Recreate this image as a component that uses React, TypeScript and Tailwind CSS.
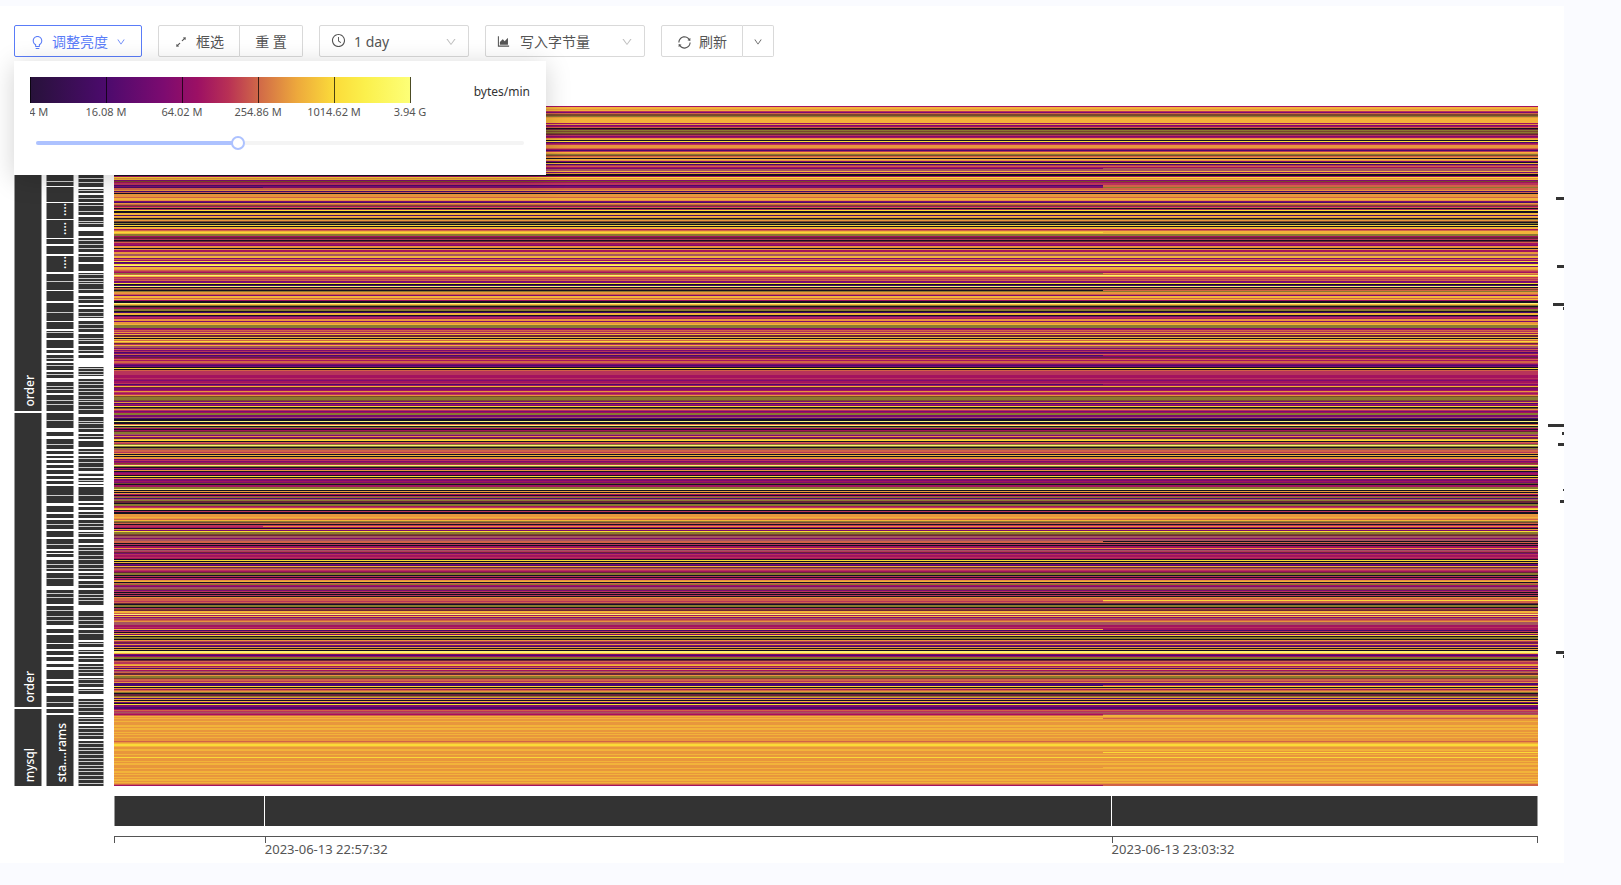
import { useState } from "react";
import {
  AiOutlineAreaChart,
  AiOutlineArrowsAlt,
  AiOutlineBulb,
  AiOutlineClockCircle,
  AiOutlineDown,
  AiOutlineSync,
} from "react-icons/ai";

const COLORS: Record<string, string> = {
  k: "#141021",
  p: "#4a0a6c",
  v: "#7c0b70",
  m: "#a3125f",
  r: "#b8345a",
  s: "#a5545f",
  c: "#d06247",
  o: "#e8963c",
  y: "#f2b33a",
  Y: "#fada38",
  L: "#fbf376",
  g: "#8a7a30",
  b: "#79492c",
  d: "#6a2438",
};

// one letter per heat map row, top to bottom, in groups of ten
const ROWS = `
  myyoyrvcbb goyyyyymov mckdgbgbdr vmoykYpmro oocmpryogb
  cokyovkypr cmsssyvokk mYoyvbmrrr pvccopckoo ocyyovpocb
  mckrYkkyyp yokgobkgkY kyymcyYygg mddrkdcmmv ookommooss
  yyvcmYpvYL vyyocrmocL yrcrcvvYkp Lkcbkgoocv yycymkkLyg
  kdmggkpyyk vrmoovooyg ggvmcromyd dykycYodry ssvcvrpvcm
  vdmcmccrvp vkYkcrrrrm mmrmvmmrvm ydvvmormro bgggbvopmv
  Ykborvmggv vspkkLkkcL kgmkmdggsv ovdyYkcrgL gkgsccroky
  koovrvmbrL gkmpokvmmk Ykovvmvbkm mggLkokomk rgpsgddkgg
  mryYkrkkoo oyocygbckr omkovYggbd ssvsscckrk mmovsrdvrm
  mrmkYkykvp ydscrmdggk rkrvoykcgm vssbvrkrkr koccrrcdkg
  gkrbdyycLm yvsrcosssm mrmyprkovY kggkordvov pokokLLyvp
  mggkdcrroy mcpomscddo ggbccroppr Ykomcogkdd gopokyvkYv
  vppmcrsrsm
  yoyooyoooy yoyyooyoyo oyooocoyYY yooyyoooyo oYoooyoyyo
  ooyooyyoyo oyoyyoyocm
`;

const CELLS = ROWS.replace(/\s/g, "").split("");

// rows whose value changes over time, as [row, colour]
const BEFORE: [number, string][] = [
  [62, "v"], [79, "p"], [80, "v"], [96, "p"], [126, "Y"], [167, "g"],
  [184, "k"], [249, "p"], [278, "p"], [435, "c"], [494, "c"], [523, "y"],
  [579, "p"], [608, "m"], [609, "c"],
];
const AFTER: [number, string][] = [
  [62, "s"], [63, "s"], [79, "c"], [80, "c"], [81, "g"], [126, "y"],
  [167, "o"], [184, "c"], [435, "k"], [494, "Y"], [495, "c"], [523, "m"],
  [609, "y"], [610, "y"], [612, "c"], [646, "Y"], [661, "y"], [678, "c"], [679, "c"],
];

// gaps between the blocks of a column, as [top, height]; the thin ones are grey
const POD_GAPS: number[][] = [
  [75], [80, 1], [96, 1], [113, 1], [132, 1], [138, 2], [148, 2], [166, 2], [175], [184, 1],
  [195, 2], [206], [215, 1], [223, 2], [226], [232, 2], [242, 2], [247, 2], [252], [255, 2],
  [259], [264, 2], [268], [272, 4], [280], [283], [287, 2], [294], [298], [305, 2], [314],
  [322, 4], [330, 3], [338], [343, 2], [348, 2], [352, 2], [357, 2], [362, 2], [368, 2],
  [373, 2], [378, 2], [389], [397, 3], [406, 2], [412, 2], [418], [423, 2], [431, 2],
  [438], [443, 2], [447, 1], [451, 3], [458], [462], [465, 2], [472], [480, 4], [487],
  [491], [498, 2], [504], [510], [514], [519, 4], [527, 2], [537, 1], [543, 2], [549, 2],
  [555, 3], [561, 3], [573, 2], [578, 2], [587, 3], [596], [601, 2], [607, 2],
];

const NODE_GAPS: number[][] = [
  [72], [76], [81, 2], [84], [87, 2], [92], [96, 1], [99], [105], [109, 2], [115], [117], [121, 4],
  [130, 2], [134], [138], [142], [146, 2], [150], [156, 2], [165, 2], [168], [172], [175],
  [177], [183], [187, 3], [193], [197, 2], [201, 2], [206], [210], [212, 3], [218], [222],
  [226, 2], [232], [234], [238, 2], [244], [247, 2], [252, 9], [262], [265], [268], [270, 3],
  [275], [278], [282], [285], [289], [293], [295], [299], [303], [308, 3], [315], [317],
  [322], [326, 2], [330], [333, 2], [341, 2], [345], [348, 2], [352], [356], [361],
  [365, 2], [367], [370, 2], [374], [376, 2], [379, 2], [389], [395, 2], [399, 2], [404, 2], [408], [412, 2],
  [417], [420], [424, 2], [427], [431, 2], [437, 2], [441], [444], [449], [453], [458],
  [462], [465, 2], [469], [473, 2], [478], [482, 2], [488], [491], [494], [499, 6],
  [510], [514], [518], [522, 2], [527], [534, 2], [537], [541, 3], [545], [548, 2],
  [552], [556, 2], [560], [563], [566], [570, 2], [573], [577], [581, 2], [584],
  [588, 5], [595], [598], [601], [605], [609, 2], [612], [615], [618, 2], [622], [626],
  [629], [633, 2], [637], [641], [644], [648], [652], [655], [659], [662], [665], [669], [673], [677],
];

const SCALE = ["4 M", "16.08 M", "64.02 M", "254.86 M", "1014.62 M", "3.94 G"];

const MARKS = [
  { y: 91, w: 8, h: 3 },
  { y: 159, w: 7, h: 3 },
  { y: 197, w: 11, h: 3 },
  { y: 201, w: 1, h: 3 },
  { y: 318, w: 16, h: 3 },
  { y: 326, w: 2, h: 3 },
  { y: 337, w: 6, h: 3 },
  { y: 383, w: 1, h: 2 },
  { y: 394, w: 4, h: 3 },
  { y: 545, w: 8, h: 3 },
  { y: 549, w: 1, h: 3 },
];

function Bars({ gaps, className }: { gaps: number[][]; className: string }) {
  return (
    <svg
      viewBox="0 0 28 680"
      preserveAspectRatio="none"
      shapeRendering="crispEdges"
      className={`block h-[680px] ${className}`}
      aria-hidden="true"
    >
      <rect width="28" height="680" fill="#333" />
      <path d="M0 0h1v680h-1zM27 0h1v680h-1z" fill="#999" />
      {gaps.map(([y, h]) => (
        <rect key={y} y={y} width="28" height={h ?? 1} fill={h ? "#fff" : "#ccc"} />
      ))}
    </svg>
  );
}

function VerticalText({ text }: { text: string }) {
  return (
    <span className="rotate-180 text-xs leading-4 font-medium whitespace-nowrap text-white [writing-mode:vertical-rl]">
      {text}
    </span>
  );
}

function Service({ name, className }: { name: string; className: string }) {
  return (
    <div className={`flex items-end border-x border-[#999] bg-[#333] pb-1 pl-[7px] ${className}`}>
      <VerticalText text={name} />
    </div>
  );
}

function Changes({ rows, x, width }: { rows: [number, string][]; x: number; width: number }) {
  return (
    <>
      {rows.map(([y, c]) => (
        <rect key={y} x={x} y={y} width={width} height="1" fill={COLORS[c]} />
      ))}
    </>
  );
}

function HeatMap() {
  return (
    <svg
      viewBox="0 0 1424 680"
      preserveAspectRatio="none"
      shapeRendering="crispEdges"
      className="block h-[680px] w-full"
      role="img"
      aria-label="写入字节量"
    >
      {CELLS.map((c, i) => (
        <rect key={i} y={i} width="1424" height="1" fill={COLORS[c]} />
      ))}
      <Changes rows={BEFORE} x={0} width={989} />
      <Changes rows={AFTER} x={989} width={435} />
      <rect y="81" x="0" width="149" height="1" fill={COLORS.p} />
      <rect y="420" x="0" width="149" height="1" fill={COLORS.r} />
    </svg>
  );
}

function Toolbar({ open, onToggle }: { open: boolean; onToggle: () => void }) {
  return (
    <div className="flex h-8 gap-4 text-sm">
      <button
        type="button"
        onClick={onToggle}
        aria-expanded={open}
        className="flex w-32 items-center rounded-xs border border-[#5a7cf8] pt-0.5 pl-[15px] text-[#5a7cf8]"
      >
        <AiOutlineBulb size={15} />
        <span className="ml-[7px]">调整亮度</span>
        <AiOutlineDown size={10} className="ml-2" />
      </button>

      <div className="flex">
        <button type="button" className="flex w-[82px] items-center rounded-l-xs border border-[#d9d9d9] pt-0.5 pl-[15px]">
          <AiOutlineArrowsAlt size={14} />
          <span className="ml-2">框选</span>
        </button>
        <button type="button" className="w-[63px] rounded-r-xs border border-l-0 border-[#d9d9d9] pt-0.5">
          重 置
        </button>
      </div>

      <div className="relative">
        <AiOutlineClockCircle size={15} className="absolute top-2 left-3" />
        <select
          aria-label="时间范围"
          className="h-8 w-[150px] appearance-none rounded-xs border border-[#d9d9d9] bg-white pt-0.5 pl-[34px]"
        >
          <option>1 day</option>
        </select>
        <AiOutlineDown size={12} className="absolute top-[11px] right-3 text-[#bfbfbf]" />
      </div>

      <div className="relative">
        <AiOutlineAreaChart size={15} className="absolute top-[9px] left-[11px]" />
        <select
          aria-label="指标"
          className="h-8 w-40 appearance-none rounded-xs border border-[#d9d9d9] bg-white pt-0.5 pl-[34px]"
        >
          <option>写入字节量</option>
        </select>
        <AiOutlineDown size={12} className="absolute top-[11px] right-3 text-[#bfbfbf]" />
      </div>

      <div className="flex">
        <button type="button" className="flex w-[82px] items-center rounded-l-xs border border-[#d9d9d9] pt-0.5 pl-[15px]">
          <AiOutlineSync size={15} />
          <span className="ml-[7px]">刷新</span>
        </button>
        <button
          type="button"
          aria-label="自动刷新"
          className="flex w-[31px] items-center justify-center rounded-r-xs border border-l-0 border-[#d9d9d9] pt-0.5"
        >
          <AiOutlineDown size={10} />
        </button>
      </div>
    </div>
  );
}

function BrightnessPanel() {
  const [value, setValue] = useState(7);

  return (
    <div className="absolute top-9 left-0 z-10 h-[114px] w-[532px] bg-white px-4 pt-4 shadow-[0_4px_24px_rgba(0,0,0,0.18)]">
      <div className="flex justify-between">
        <div>
          <div className="flex h-[26px] w-[381px] justify-between bg-[linear-gradient(90deg,#27123a_0%,#4c0a6d_20%,#7c0b70_35%,#9c1064_44%,#b83055_52%,#d06848_60%,#eda83c_70%,#fbdc3a_80%,#fbf04c_88%,#fdff78_100%)]">
            {SCALE.map((label) => (
              <span key={label} className="w-px bg-black/70" />
            ))}
          </div>
          <div className="-mr-10 flex w-[420px] overflow-hidden text-[11px] leading-[18px]">
            {SCALE.map((label, i) => (
              <span key={label} className={i === 0 ? "-ml-px w-[39px] shrink-0" : "w-[76px] shrink-0 text-center"}>
                {label}
              </span>
            ))}
          </div>
        </div>
        <span className="pt-[7px] text-xs leading-4 text-[#333]">bytes/min</span>
      </div>
      <div className="relative mx-1.5 mt-[15px] h-[14px]">
        <div className="absolute inset-x-0 top-[5px] h-1 rounded-sm bg-[#f4f4f4]">
          <div className="h-1 rounded-sm bg-[#adc2ff]" style={{ width: `${(value / 17) * 100}%` }} />
        </div>
        <input
          type="range"
          aria-label="调整亮度"
          min={0}
          max={17}
          value={value}
          onChange={(e) => setValue(Number(e.target.value))}
          className="absolute inset-0 h-[14px] w-full appearance-none bg-transparent [&::-webkit-slider-thumb]:size-[14px] [&::-webkit-slider-thumb]:appearance-none [&::-webkit-slider-thumb]:rounded-full [&::-webkit-slider-thumb]:border-2 [&::-webkit-slider-thumb]:border-solid [&::-webkit-slider-thumb]:border-[#adc2ff] [&::-webkit-slider-thumb]:bg-white"
        />
      </div>
    </div>
  );
}

function TimeAxis() {
  return (
    <div className="ml-[100px]">
      <div className="mt-2.5 flex h-[30px] gap-px border-x border-[#999]">
        <div className="grow-149 basis-0 bg-[#333]" />
        <div className="grow-847 basis-0 bg-[#333]" />
        <div className="grow-426 basis-0 bg-[#333]" />
      </div>
      <div className="mt-2.5 flex border-t border-[#555] text-[13px] leading-3">
        <div className="h-1.5 grow-150 basis-0 border-l border-[#555]" />
        <div className="grow-848 basis-0">
          <div className="h-1.5 border-l border-[#555]" />
          2023-06-13 22:57:32
        </div>
        <div className="grow-427 basis-0">
          <div className="h-1.5 border-x border-[#555]" />
          2023-06-13 23:03:32
        </div>
      </div>
    </div>
  );
}

export default function App() {
  const [open, setOpen] = useState(true);

  return (
    <div className="min-h-screen bg-[#fafbff] pt-1.5 pr-[57px] font-['Noto_Sans','Noto_Sans_CJK_SC',sans-serif] text-[#555]">
      <div className="flex bg-white pt-[19px]">
        <div className="min-w-0 flex-1 pb-2 pl-3.5">
          <div className="relative">
            <Toolbar open={open} onToggle={() => setOpen(!open)} />
            {open && <BrightnessPanel />}
          </div>

          <div className="mt-[49px] flex">
            <div className="flex w-7 flex-col gap-0.5">
              <Service name="order" className="h-[305px]" />
              <Service name="order" className="h-[294px]" />
              <Service name="mysql" className="flex-1" />
            </div>
            <div className="relative ml-1 w-7">
              <Bars gaps={POD_GAPS} className="w-7" />
              <div className="absolute bottom-1 left-2 flex">
                <VerticalText text="sta....rams" />
              </div>
              <div className="absolute top-[97px] left-2 flex">
                <VerticalText text="...." />
              </div>
              <div className="absolute top-[116px] left-2 flex">
                <VerticalText text="...." />
              </div>
              <div className="absolute top-[150px] left-2 flex">
                <VerticalText text="...." />
              </div>
            </div>
            <Bars gaps={NODE_GAPS} className="ml-1 w-[26px]" />
            <div className="ml-2.5 min-w-0 flex-1">
              <HeatMap />
            </div>
          </div>

          <TimeAxis />
        </div>

        <svg width="26" height="750" className="mt-[81px] block shrink-0" shapeRendering="crispEdges" aria-hidden="true">
          {MARKS.map((m) => (
            <rect key={m.y} x={26 - m.w} y={m.y} width={m.w} height={m.h} fill="#333" />
          ))}
        </svg>
      </div>
    </div>
  );
}
